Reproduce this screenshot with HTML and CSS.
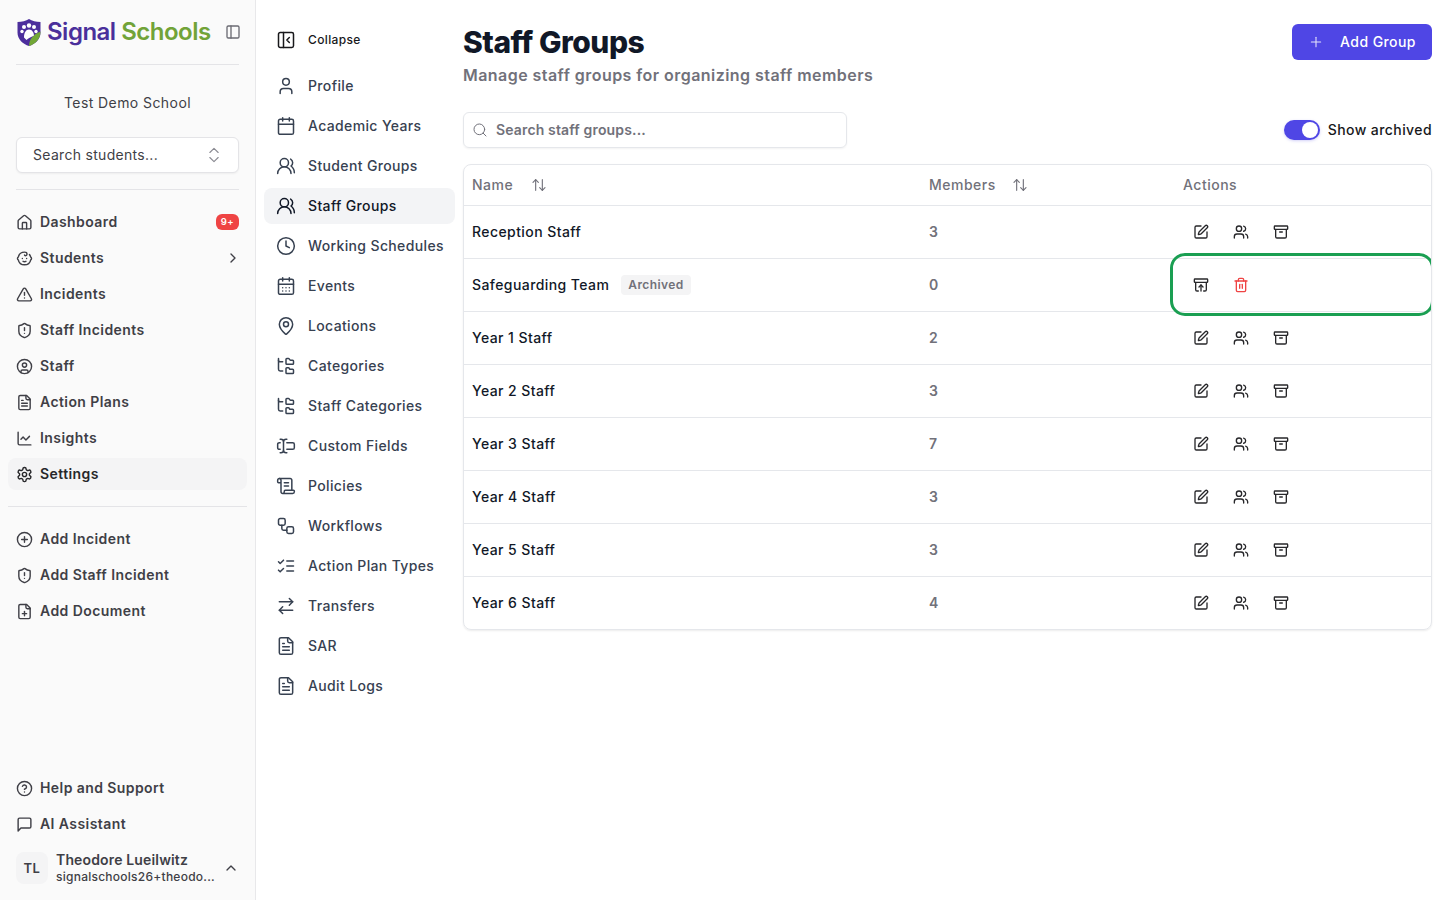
FILE: index.html
```html
<!DOCTYPE html>
<html lang="en">
<head>
<meta charset="utf-8">
<title>Staff Groups</title>
<link rel="stylesheet" href="styles.css">
</head>
<body>
<svg class="defs" aria-hidden="true">
<symbol id="i-panel" viewBox="0 0 24 24"><rect x="3" y="3" width="18" height="18" rx="2"/><path d="M9 3v18"/></symbol>
<symbol id="i-collapse" viewBox="0 0 24 24"><rect x="3" y="3" width="18" height="18" rx="2"/><path d="M9 3v18"/><path d="m16 15-3-3 3-3"/></symbol>
<symbol id="i-updown" viewBox="0 0 24 24"><path d="m7 15 5 5 5-5"/><path d="m7 9 5-5 5 5"/></symbol>
<symbol id="i-house" viewBox="0 0 24 24"><path d="M15 21v-8a1 1 0 0 0-1-1h-4a1 1 0 0 0-1 1v8"/><path d="M3 10a2 2 0 0 1 .709-1.528l7-5.999a2 2 0 0 1 2.582 0l7 5.999A2 2 0 0 1 21 10v9a2 2 0 0 1-2 2H5a2 2 0 0 1-2-2z"/></symbol>
<symbol id="i-baby" viewBox="0 0 24 24"><path d="M9 12h.01"/><path d="M15 12h.01"/><path d="M10 16c.5.3 1.2.5 2 .5s1.5-.2 2-.5"/><path d="M19 6.3a9 9 0 0 1 1.8 3.9 2 2 0 0 1 0 3.6 9 9 0 0 1-17.6 0 2 2 0 0 1 0-3.6A9 9 0 0 1 12 3c2 0 3.5 1.1 3.5 2.5s-.9 2.5-2 2.5c-.8 0-1.5-.4-1.5-1"/></symbol>
<symbol id="i-alert" viewBox="0 0 24 24"><path d="m21.73 18-8-14a2 2 0 0 0-3.48 0l-8 14A2 2 0 0 0 4 21h16a2 2 0 0 0 1.73-3"/><path d="M12 9v4"/><path d="M12 17h.01"/></symbol>
<symbol id="i-shield" viewBox="0 0 24 24"><path d="M20 13c0 5-3.5 7.5-7.66 8.95a1 1 0 0 1-.67-.01C7.5 20.5 4 18 4 13V6a1 1 0 0 1 1-1c2 0 4.5-1.2 6.24-2.72a1.17 1.17 0 0 1 1.52 0C14.51 3.81 17 5 19 5a1 1 0 0 1 1 1z"/><path d="M12 8v4"/><path d="M12 16h.01"/></symbol>
<symbol id="i-cuser" viewBox="0 0 24 24"><circle cx="12" cy="12" r="10"/><circle cx="12" cy="10" r="3"/><path d="M7 20.662V19a2 2 0 0 1 2-2h6a2 2 0 0 1 2 2v1.662"/></symbol>
<symbol id="i-file" viewBox="0 0 24 24"><path d="M15 2H6a2 2 0 0 0-2 2v16a2 2 0 0 0 2 2h12a2 2 0 0 0 2-2V7Z"/><path d="M14 2v4a2 2 0 0 0 2 2h4"/><path d="M10 9H8"/><path d="M16 13H8"/><path d="M16 17H8"/></symbol>
<symbol id="i-chart" viewBox="0 0 24 24"><path d="M3 3v16a2 2 0 0 0 2 2h16"/><path d="m19 9-5 5-4-4-3 3"/></symbol>
<symbol id="i-gear" viewBox="0 0 24 24"><path d="M12.22 2h-.44a2 2 0 0 0-2 2v.18a2 2 0 0 1-1 1.73l-.43.25a2 2 0 0 1-2 0l-.15-.08a2 2 0 0 0-2.73.73l-.22.38a2 2 0 0 0 .73 2.73l.15.1a2 2 0 0 1 1 1.72v.51a2 2 0 0 1-1 1.74l-.15.09a2 2 0 0 0-.73 2.73l.22.38a2 2 0 0 0 2.73.73l.15-.08a2 2 0 0 1 2 0l.43.25a2 2 0 0 1 1 1.73V20a2 2 0 0 0 2 2h.44a2 2 0 0 0 2-2v-.18a2 2 0 0 1 1-1.73l.43-.25a2 2 0 0 1 2 0l.15.08a2 2 0 0 0 2.73-.73l.22-.39a2 2 0 0 0-.73-2.73l-.15-.08a2 2 0 0 1-1-1.74v-.5a2 2 0 0 1 1-1.74l.15-.09a2 2 0 0 0 .73-2.73l-.22-.38a2 2 0 0 0-2.73-.73l-.15.08a2 2 0 0 1-2 0l-.43-.25a2 2 0 0 1-1-1.73V4a2 2 0 0 0-2-2z"/><circle cx="12" cy="12" r="3"/></symbol>
<symbol id="i-cplus" viewBox="0 0 24 24"><circle cx="12" cy="12" r="10"/><path d="M8 12h8"/><path d="M12 8v8"/></symbol>
<symbol id="i-fplus" viewBox="0 0 24 24"><path d="M15 2H6a2 2 0 0 0-2 2v16a2 2 0 0 0 2 2h12a2 2 0 0 0 2-2V7Z"/><path d="M14 2v4a2 2 0 0 0 2 2h4"/><path d="M9 15h6"/><path d="M12 18v-6"/></symbol>
<symbol id="i-help" viewBox="0 0 24 24"><circle cx="12" cy="12" r="10"/><path d="M9.09 9a3 3 0 0 1 5.83 1c0 2-3 3-3 3"/><path d="M12 17h.01"/></symbol>
<symbol id="i-msg" viewBox="0 0 24 24"><path d="M21 15a2 2 0 0 1-2 2H7l-4 4V5a2 2 0 0 1 2-2h14a2 2 0 0 1 2 2z"/></symbol>
<symbol id="i-right" viewBox="0 0 24 24"><path d="m9 18 6-6-6-6"/></symbol>
<symbol id="i-up" viewBox="0 0 24 24"><path d="m18 15-6-6-6 6"/></symbol>
<symbol id="i-user" viewBox="0 0 24 24"><path d="M19 21v-2a4 4 0 0 0-4-4H9a4 4 0 0 0-4 4v2"/><circle cx="12" cy="7" r="4"/></symbol>
<symbol id="i-cal" viewBox="0 0 24 24"><path d="M8 2v4"/><path d="M16 2v4"/><rect x="3" y="4" width="18" height="18" rx="2"/><path d="M3 10h18"/></symbol>
<symbol id="i-users" viewBox="0 0 24 24"><path d="M16 21v-2a4 4 0 0 0-4-4H6a4 4 0 0 0-4 4v2"/><circle cx="9" cy="7" r="4"/><path d="M22 21v-2a4 4 0 0 0-3-3.87"/><path d="M16 3.13a4 4 0 0 1 0 7.75"/></symbol>
<symbol id="i-usersround" viewBox="0 0 24 24"><path d="M18 21a8 8 0 0 0-16 0"/><circle cx="10" cy="8" r="5"/><path d="M22 20c0-3.37-2-6.5-4-8a5 5 0 0 0-.45-8.3"/></symbol>
<symbol id="i-clock" viewBox="0 0 24 24"><circle cx="12" cy="12" r="10"/><path d="M12 6v6l4 2"/></symbol>
<symbol id="i-caldays" viewBox="0 0 24 24"><path d="M8 2v4"/><path d="M16 2v4"/><rect x="3" y="4" width="18" height="18" rx="2"/><path d="M3 10h18"/><path d="M8 14h.01"/><path d="M12 14h.01"/><path d="M16 14h.01"/><path d="M8 18h.01"/><path d="M12 18h.01"/><path d="M16 18h.01"/></symbol>
<symbol id="i-pin" viewBox="0 0 24 24"><path d="M20 10c0 4.993-5.539 10.193-7.399 11.799a1 1 0 0 1-1.202 0C9.539 20.193 4 14.993 4 10a8 8 0 0 1 16 0"/><circle cx="12" cy="10" r="3"/></symbol>
<symbol id="i-tree" viewBox="0 0 24 24"><path d="M20 10a1 1 0 0 0 1-1V6a1 1 0 0 0-1-1h-2.5a1 1 0 0 1-.8-.4l-.9-1.2A1 1 0 0 0 15 3h-2a1 1 0 0 0-1 1v5a1 1 0 0 0 1 1Z"/><path d="M20 21a1 1 0 0 0 1-1v-3a1 1 0 0 0-1-1h-2.9a1 1 0 0 1-.88-.55l-.42-.85a1 1 0 0 0-.92-.6H13a1 1 0 0 0-1 1v5a1 1 0 0 0 1 1Z"/><path d="M3 5a2 2 0 0 0 2 2h3"/><path d="M3 3v13a2 2 0 0 0 2 2h3"/></symbol>
<symbol id="i-field" viewBox="0 0 24 24"><path d="M5 4h1a3 3 0 0 1 3 3 3 3 0 0 1 3-3h1"/><path d="M13 20h-1a3 3 0 0 1-3-3 3 3 0 0 1-3 3H5"/><path d="M5 16H4a2 2 0 0 1-2-2v-4a2 2 0 0 1 2-2h1"/><path d="M13 8h7a2 2 0 0 1 2 2v4a2 2 0 0 1-2 2h-7"/><path d="M9 7v10"/></symbol>
<symbol id="i-scroll" viewBox="0 0 24 24"><path d="M15 12h-5"/><path d="M15 8h-5"/><path d="M19 17V5a2 2 0 0 0-2-2H4"/><path d="M8 21h12a2 2 0 0 0 2-2v-1a1 1 0 0 0-1-1H11a1 1 0 0 0-1 1v1a2 2 0 1 1-4 0V5a2 2 0 1 0-4 0v2a1 1 0 0 0 1 1h3"/></symbol>
<symbol id="i-flow" viewBox="0 0 24 24"><rect x="3" y="3" width="8" height="8" rx="2"/><path d="M7 11v4a2 2 0 0 0 2 2h4"/><rect x="13" y="13" width="8" height="8" rx="2"/></symbol>
<symbol id="i-checks" viewBox="0 0 24 24"><path d="m3 17 2 2 4-4"/><path d="m3 7 2 2 4-4"/><path d="M13 6h8"/><path d="M13 12h8"/><path d="M13 18h8"/></symbol>
<symbol id="i-swap" viewBox="0 0 24 24"><path d="m16 3 4 4-4 4"/><path d="M20 7H4"/><path d="m8 21-4-4 4-4"/><path d="M4 17h16"/></symbol>
<symbol id="i-pen" viewBox="0 0 24 24"><path d="M12 3H5a2 2 0 0 0-2 2v14a2 2 0 0 0 2 2h14a2 2 0 0 0 2-2v-7"/><path d="M18.375 2.625a1 1 0 0 1 3 3l-9.013 9.014a2 2 0 0 1-.853.505l-2.873.84a.5.5 0 0 1-.62-.62l.84-2.873a2 2 0 0 1 .506-.852z"/></symbol>
<symbol id="i-archive" viewBox="0 0 24 24"><rect x="2" y="3" width="20" height="5" rx="1"/><path d="M4 8v11a2 2 0 0 0 2 2h12a2 2 0 0 0 2-2V8"/><path d="M10 12h4"/></symbol>
<symbol id="i-restore" viewBox="0 0 24 24"><rect x="2" y="3" width="20" height="5" rx="1"/><path d="M4 8v11a2 2 0 0 0 2 2h2"/><path d="M20 8v11a2 2 0 0 1-2 2h-2"/><path d="m9 15 3-3 3 3"/><path d="M12 12v9"/></symbol>
<symbol id="i-trash" viewBox="0 0 24 24"><path d="M3 6h18"/><path d="M19 6v14c0 1-1 2-2 2H7c-1 0-2-1-2-2V6"/><path d="M8 6V4c0-1 1-2 2-2h4c1 0 2 1 2 2v2"/><path d="M10 11v6"/><path d="M14 11v6"/></symbol>
<symbol id="i-sort" viewBox="0 0 24 24"><path d="m21 16-4 4-4-4"/><path d="M17 20V4"/><path d="m3 8 4-4 4 4"/><path d="M7 4v16"/></symbol>
<symbol id="i-search" viewBox="0 0 24 24"><circle cx="11" cy="11" r="8"/><path d="m21 21-4.3-4.3"/></symbol>
<symbol id="i-plus" viewBox="0 0 24 24"><path d="M5 12h14"/><path d="M12 5v14"/></symbol>
</svg>

<div class="app">
<aside class="sidebar">
  <div class="brand">
    <svg class="logo-mark" viewBox="0 0 24 28" aria-hidden="true">
      <path class="shield-purple" d="M12 0.5C15 2.500 19 3.500 23.500 3.500V14C23.500 21 18 25.500 12 27.500C6 25.500 0.500 21 0.500 14V3.500C5 3.500 9 2.500 12 0.500Z"/>
      <path class="shield-green" d="M23.500 13C23.500 21 18 25.500 12 27.500C12 21 16 16 23.500 13Z"/>
      <circle class="shield-white" cx="7" cy="8.500" r="2"/><circle class="shield-white" cx="17" cy="8.500" r="2"/><circle class="shield-white" cx="12" cy="7" r="2.200"/>
      <circle class="shield-white" cx="5" cy="13" r="1.700"/><circle class="shield-white" cx="19" cy="13" r="1.700"/>
      <path class="shield-white" d="M7 19C7 14 9 11 12 11S17 14 17 17C15 18 11 20 9.500 21.500Z"/>
    </svg>
    <span class="logo-text"><span class="logo-a">Signal</span> <span class="logo-b">Schools</span></span>
    <svg class="ic ic-16 brand-toggle"><use href="#i-panel"/></svg>
  </div>
  <div class="rule"></div>
  <div class="school">Test Demo School</div>
  <div class="combo"><span>Search students...</span><svg class="ic ic-20 combo-ic"><use href="#i-updown"/></svg></div>
  <div class="rule rule-b"></div>

  <nav class="menu">
    <a class="mi"><svg class="ic ic-17"><use href="#i-house"/></svg><span class="grow">Dashboard</span><span class="badge">9+</span></a>
    <a class="mi"><svg class="ic ic-17"><use href="#i-baby"/></svg><span class="grow">Students</span><svg class="ic ic-16 dark"><use href="#i-right"/></svg></a>
    <a class="mi"><svg class="ic ic-17"><use href="#i-alert"/></svg><span class="grow">Incidents</span></a>
    <a class="mi"><svg class="ic ic-17"><use href="#i-shield"/></svg><span class="grow">Staff Incidents</span></a>
    <a class="mi"><svg class="ic ic-17"><use href="#i-cuser"/></svg><span class="grow">Staff</span></a>
    <a class="mi"><svg class="ic ic-17"><use href="#i-file"/></svg><span class="grow">Action Plans</span></a>
    <a class="mi"><svg class="ic ic-17"><use href="#i-chart"/></svg><span class="grow">Insights</span></a>
    <a class="mi mi-on"><svg class="ic ic-17"><use href="#i-gear"/></svg><span class="grow">Settings</span></a>
  </nav>
  <div class="rule-wide"></div>
  <nav class="menu">
    <a class="mi"><svg class="ic ic-17"><use href="#i-cplus"/></svg><span class="grow">Add Incident</span></a>
    <a class="mi"><svg class="ic ic-17"><use href="#i-shield"/></svg><span class="grow">Add Staff Incident</span></a>
    <a class="mi"><svg class="ic ic-17"><use href="#i-fplus"/></svg><span class="grow">Add Document</span></a>
  </nav>
  <nav class="menu menu-bottom">
    <a class="mi"><svg class="ic ic-17"><use href="#i-help"/></svg><span class="grow">Help and Support</span></a>
    <a class="mi"><svg class="ic ic-17"><use href="#i-msg"/></svg><span class="grow">AI Assistant</span></a>
  </nav>
  <div class="who">
    <div class="avatar">TL</div>
    <div class="who-text"><div class="who-name">Theodore Lueilwitz</div><div class="who-mail">signalschools26+theodo...</div></div>
    <svg class="ic ic-16"><use href="#i-up"/></svg>
  </div>
</aside>

<nav class="subnav">
  <a class="si si-collapse"><svg class="ic ic-20"><use href="#i-collapse"/></svg><span>Collapse</span></a>
  <a class="si"><svg class="ic ic-20"><use href="#i-user"/></svg><span>Profile</span></a>
  <a class="si"><svg class="ic ic-20"><use href="#i-cal"/></svg><span>Academic Years</span></a>
  <a class="si"><svg class="ic ic-20"><use href="#i-usersround"/></svg><span>Student Groups</span></a>
  <a class="si si-on"><svg class="ic ic-20"><use href="#i-usersround"/></svg><span>Staff Groups</span></a>
  <a class="si"><svg class="ic ic-20"><use href="#i-clock"/></svg><span>Working Schedules</span></a>
  <a class="si"><svg class="ic ic-20"><use href="#i-caldays"/></svg><span>Events</span></a>
  <a class="si"><svg class="ic ic-20"><use href="#i-pin"/></svg><span>Locations</span></a>
  <a class="si"><svg class="ic ic-20"><use href="#i-tree"/></svg><span>Categories</span></a>
  <a class="si"><svg class="ic ic-20"><use href="#i-tree"/></svg><span>Staff Categories</span></a>
  <a class="si"><svg class="ic ic-20"><use href="#i-field"/></svg><span>Custom Fields</span></a>
  <a class="si"><svg class="ic ic-20"><use href="#i-scroll"/></svg><span>Policies</span></a>
  <a class="si"><svg class="ic ic-20"><use href="#i-flow"/></svg><span>Workflows</span></a>
  <a class="si"><svg class="ic ic-20"><use href="#i-checks"/></svg><span>Action Plan Types</span></a>
  <a class="si"><svg class="ic ic-20"><use href="#i-swap"/></svg><span>Transfers</span></a>
  <a class="si"><svg class="ic ic-20"><use href="#i-file"/></svg><span>SAR</span></a>
  <a class="si"><svg class="ic ic-20"><use href="#i-file"/></svg><span>Audit Logs</span></a>
</nav>

<main class="main">
  <header class="head">
    <div>
      <h1>Staff Groups</h1>
      <p class="sub">Manage staff groups for organizing staff members</p>
    </div>
    <button class="add"><svg class="ic ic-16"><use href="#i-plus"/></svg><span>Add Group</span></button>
  </header>
  <div class="tools">
    <div class="search"><svg class="ic ic-16"><use href="#i-search"/></svg><span>Search staff groups...</span></div>
    <div class="archived"><span class="switch"><span class="knob"></span></span><span class="archived-label">Show archived</span></div>
  </div>
  <div class="card">
    <table>
      <colgroup><col class="c1"><col class="c2"><col></colgroup>
      <thead><tr>
        <th><span class="th-in">Name<svg class="ic ic-16"><use href="#i-sort"/></svg></span></th>
        <th><span class="th-in">Members<svg class="ic ic-16"><use href="#i-sort"/></svg></span></th>
        <th>Actions</th>
      </tr></thead>
      <tbody>
        <tr><td class="name">Reception Staff</td><td class="num">3</td><td><div class="acts"><span class="btn"><svg class="ic ic-16"><use href="#i-pen"/></svg></span><span class="btn"><svg class="ic ic-16"><use href="#i-users"/></svg></span><span class="btn"><svg class="ic ic-16"><use href="#i-archive"/></svg></span></div></td></tr>
        <tr><td class="name">Safeguarding Team<span class="tag">Archived</span></td><td class="num">0</td><td><div class="acts"><span class="btn"><svg class="ic ic-16"><use href="#i-restore"/></svg></span><span class="btn"><svg class="ic ic-16 red"><use href="#i-trash"/></svg></span></div></td></tr>
        <tr><td class="name">Year 1 Staff</td><td class="num">2</td><td><div class="acts"><span class="btn"><svg class="ic ic-16"><use href="#i-pen"/></svg></span><span class="btn"><svg class="ic ic-16"><use href="#i-users"/></svg></span><span class="btn"><svg class="ic ic-16"><use href="#i-archive"/></svg></span></div></td></tr>
        <tr><td class="name">Year 2 Staff</td><td class="num">3</td><td><div class="acts"><span class="btn"><svg class="ic ic-16"><use href="#i-pen"/></svg></span><span class="btn"><svg class="ic ic-16"><use href="#i-users"/></svg></span><span class="btn"><svg class="ic ic-16"><use href="#i-archive"/></svg></span></div></td></tr>
        <tr><td class="name">Year 3 Staff</td><td class="num">7</td><td><div class="acts"><span class="btn"><svg class="ic ic-16"><use href="#i-pen"/></svg></span><span class="btn"><svg class="ic ic-16"><use href="#i-users"/></svg></span><span class="btn"><svg class="ic ic-16"><use href="#i-archive"/></svg></span></div></td></tr>
        <tr><td class="name">Year 4 Staff</td><td class="num">3</td><td><div class="acts"><span class="btn"><svg class="ic ic-16"><use href="#i-pen"/></svg></span><span class="btn"><svg class="ic ic-16"><use href="#i-users"/></svg></span><span class="btn"><svg class="ic ic-16"><use href="#i-archive"/></svg></span></div></td></tr>
        <tr><td class="name">Year 5 Staff</td><td class="num">3</td><td><div class="acts"><span class="btn"><svg class="ic ic-16"><use href="#i-pen"/></svg></span><span class="btn"><svg class="ic ic-16"><use href="#i-users"/></svg></span><span class="btn"><svg class="ic ic-16"><use href="#i-archive"/></svg></span></div></td></tr>
        <tr><td class="name">Year 6 Staff</td><td class="num">4</td><td><div class="acts"><span class="btn"><svg class="ic ic-16"><use href="#i-pen"/></svg></span><span class="btn"><svg class="ic ic-16"><use href="#i-users"/></svg></span><span class="btn"><svg class="ic ic-16"><use href="#i-archive"/></svg></span></div></td></tr>
      </tbody>
    </table>
    <div class="ring"></div>
  </div>
</main>
</div>
</body>
</html>
```
FILE: styles.css
```css
* { box-sizing: border-box; }
html, body { margin: 0; height: 100%; }
body { font-family: Inter, "Open Sans", sans-serif; font-size: 14px; color: #18181b; background: #fff; letter-spacing: .42px; overflow: hidden; }
.defs { display: none; }
.ic { fill: none; stroke: currentColor; stroke-width: 2; stroke-linecap: round; stroke-linejoin: round; flex: none; display: block; }
.ic-16 { width: 16px; height: 16px; }
.ic-17 { width: 17px; height: 17px; }
.ic-20 { width: 20px; height: 20px; }
.app { display: flex; height: 900px; }

/* left sidebar */
.sidebar { width: 256px; flex: none; background: #fafafa; border-right: 1px solid #e8e8ea; display: flex; flex-direction: column; height: 900px; }
.brand { height: 64px; padding: 0 14px 0 17px; display: flex; align-items: center; }
.logo-mark { width: 24px; height: 29px; flex: none; margin-right: 6px; }
.shield-purple { fill: #4c2e9c; }
.shield-green { fill: #72a736; }
.shield-white { fill: #fff; }
.logo-text { font-size: 24px; font-weight: 600; letter-spacing: -.5px; white-space: nowrap; flex: 1; margin-bottom: 2px; }
.logo-a { color: #4a2f9b; }
.logo-b { color: #71a338; }
.brand-toggle { color: #6b6b73; }
.rule { height: 1px; background: #e4e4e7; margin: 0 16px; flex: none; }
.rule-b { margin-top: 16px; margin-bottom: 16px; }
.rule-wide { height: 1px; background: #e4e4e7; margin: 16px 8px; flex: none; }
.school { text-align: center; color: #3f3f46; height: 72px; padding-top: 2px; display: flex; align-items: center; justify-content: center; }
.combo { margin: 0 16px; height: 36px; background: #fff; border: 1px solid #e4e4e7; border-radius: 6px; box-shadow: 0 1px 2px rgba(0,0,0,.05); display: flex; align-items: center; justify-content: space-between; padding: 0 14px 0 16px; color: #3f3f46; flex: none; letter-spacing: .3px; }
.combo span { margin-bottom: 2px; }
.combo-ic { color: #8a8a92; stroke-width: 1.3; }
.menu { display: flex; flex-direction: column; padding: 0 8px; gap: 4px; }
.menu-bottom { margin-top: auto; }
.mi { height: 32px; padding: 0 8px; display: flex; align-items: center; gap: 7px; border-radius: 8px; color: #3f3f46; font-weight: 600; font-size: 14px; flex: none; }
.mi-on { background: #f4f4f5; color: #27272a; }
.grow { flex: 1; white-space: nowrap; margin-bottom: 2px; }
.badge { background: #ef4444; color: #fff; font-size: 9.5px; line-height: 16px; height: 16px; width: 23px; text-align: center; border-radius: 6px; font-weight: 600; letter-spacing: .6px; }
.dark { color: #3f3f46; margin-right: -2px; }
.who { display: flex; align-items: center; padding: 0 16px; height: 36px; margin: 10px 0 14px; gap: 8px; color: #3f3f46; flex: none; }
.avatar { width: 32px; height: 32px; border-radius: 8px; background: #f4f4f5; display: flex; align-items: center; justify-content: center; font-weight: 600; font-size: 13px; }
.who-text { flex: 1; min-width: 0; margin-bottom: 1px; }
.who-name { font-weight: 600; font-size: 14px; line-height: 18px; white-space: nowrap; letter-spacing: .15px; }
.who-mail { font-size: 12px; line-height: 16px; font-weight: 500; white-space: nowrap; letter-spacing: .25px; }

/* settings sub navigation */
.subnav { width: 191px; margin: 0 8px; flex: none; display: flex; flex-direction: column; padding-top: 22px; gap: 4px; }
.si { height: 36px; padding: 0 12px; display: flex; align-items: center; gap: 12px; border-radius: 8px; color: #374151; font-weight: 500; white-space: nowrap; flex: none; letter-spacing: .36px; }
.si span { margin-bottom: 1px; }
.si .ic { stroke-width: 1.8; }
.si-collapse { color: #18181b; font-size: 12px; margin-bottom: 6px; }
.si-collapse span { margin-bottom: 2px; }
.si-on { background: #f3f4f6; color: #111827; }

/* main */
.main { width: 969px; flex: none; }
.head { display: flex; justify-content: space-between; align-items: flex-start; padding-top: 24px; height: 112px; }
h1 { margin: 0; font-size: 30px; line-height: 36px; font-weight: 800; color: #111827; letter-spacing: -.5px; }
.sub { margin: 3px 0 0; font-size: 16px; line-height: 24px; font-weight: 600; color: #71717a; letter-spacing: .45px; }
.add { width: 140px; height: 36px; border: 0; border-radius: 6px; background: #4f46e5; color: #fff; font: inherit; letter-spacing: inherit; font-weight: 500; display: flex; align-items: center; justify-content: center; gap: 16px; padding: 0; }
.add span { margin-bottom: 2px; }
.add .ic { stroke-width: 1.6; opacity: .85; }
.tools { display: flex; justify-content: space-between; align-items: center; height: 36px; }
.search { width: 384px; height: 36px; border: 1px solid #e5e7eb; border-radius: 6px; box-shadow: 0 1px 2px rgba(0,0,0,.05); display: flex; align-items: center; padding: 0 8px; gap: 8px; color: #71717a; font-weight: 600; letter-spacing: .15px; }
.search span { margin-bottom: 2px; }
.search .ic { stroke-width: 1.5; }
.archived { display: flex; align-items: center; gap: 8px; font-weight: 500; color: #18181b; }
.archived-label { margin-bottom: 2px; }
.switch { width: 36px; height: 20px; border-radius: 10px; background: #4f46e5; display: flex; align-items: center; justify-content: flex-end; padding: 2px; box-shadow: 0 1px 3px rgba(79,70,229,.25); }
.knob { width: 16px; height: 16px; border-radius: 50%; background: #fff; }
.card { position: relative; margin-top: 16px; border: 1px solid #e5e7eb; border-radius: 8px; overflow: hidden; box-shadow: 0 1px 2px rgba(0,0,0,.08); }
table { width: 100%; table-layout: fixed; border-collapse: collapse; }
.c1 { width: 457px; }
.c2 { width: 254px; }
th { height: 40px; padding: 0 8px; text-align: left; font-weight: 500; color: #71717a; border-bottom: 1px solid #e5e7eb; letter-spacing: .5px; }
.th-in { display: flex; align-items: center; gap: 16px; }
th:first-child .th-in { gap: 18px; }
.th-in .ic { stroke-width: 1.7; }
td { height: 53px; padding: 0 8px; border-bottom: 1px solid #e5e7eb; }
tr:last-child td { border-bottom: 0; }
.name { font-weight: 500; color: #111827; }
.num { font-weight: 600; color: #71717a; }
.tag { display: inline-block; margin-left: 12px; height: 20px; line-height: 20px; padding: 0 7px; background: #f4f4f5; color: #71717a; border-radius: 4px; font-size: 12px; font-weight: 600; vertical-align: 1px; }
.acts { display: flex; gap: 4px; }
.btn { width: 36px; height: 32px; display: flex; align-items: center; justify-content: center; color: #27272a; }
.red { color: #ef4444; }
.ring { position: absolute; left: 706px; top: 88px; width: 264px; height: 63px; border: 3px solid #1a9f52; border-radius: 15px; pointer-events: none; }
```
